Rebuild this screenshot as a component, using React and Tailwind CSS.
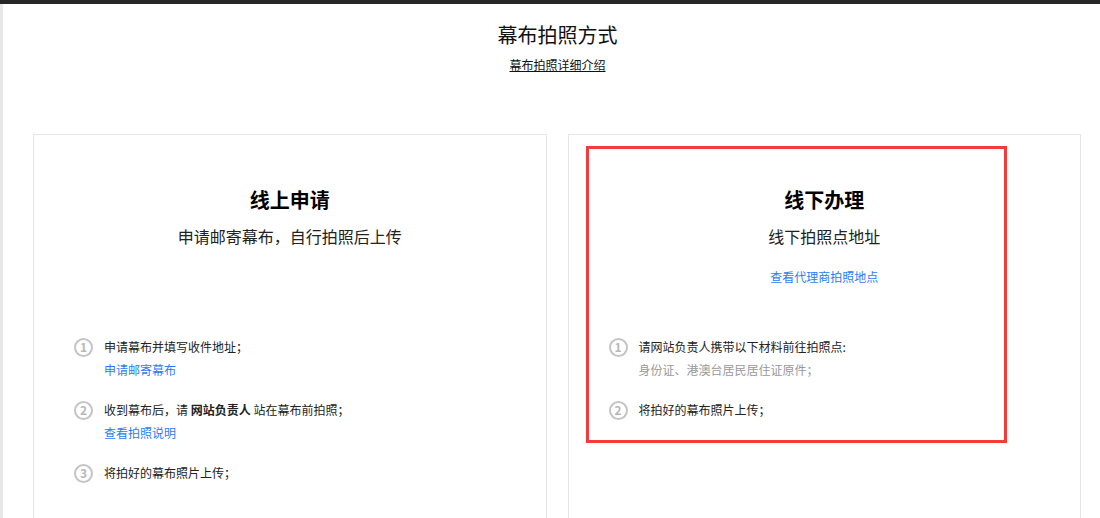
const font = { fontFamily: '"Noto Sans CJK SC", "Microsoft YaHei", sans-serif' };

function StepNum({ n }) {
  return <span className="mt-[2.5px] w-[19px] h-[19px] shrink-0 rounded-full border-2 border-[#c4c4c4] text-[#b8b8b8] text-[12px] font-bold leading-none flex items-center justify-center">{n}</span>;
}

function Step({ n, children, sub }) {
  return <div className="flex items-start gap-[11px]">
    <StepNum n={n}/>
    <div className="text-[12px] leading-[23px] text-[#222]">
      <p>{children}</p>
      {sub}
    </div>
  </div>;
}

function Card({ title, subtitle, link, children, highlight }) {
  return <div className="relative border border-[#e6e6e6] h-[400px] bg-white">
    {highlight && <div className="absolute left-[17px] top-[11px] w-[421px] h-[297px] border-[3px] border-[#f23c3c]"/>}
    <div className="h-[200px] pt-[51px] text-center">
      <h2 className="text-[20px] leading-[28px] font-bold text-black">{title}</h2>
      <p className="mt-[10px] text-[16px] leading-[24px] text-[#222]">{subtitle}</p>
      {link && <a className="block mt-[20px] text-[12px] leading-[18px] text-[#2d7bf4]">{link}</a>}
    </div>
    <div className="pl-[40px] flex flex-col gap-[17px]">
      {children}
    </div>
  </div>;
}

export default function App() {
  return <div className="w-[1100px] h-[518px] overflow-hidden bg-white" style={font}>
    <div className="h-[4px] bg-[#262626]"/>
    <div className="flex">
      <div className="w-[3px] h-[514px] bg-[#e8e8e8] shrink-0"/>
      <div className="flex-1">
        <div className="pl-[12px] pt-[17px] text-center">
          <h1 className="text-[20px] leading-[28px] text-[#111]">幕布拍照方式</h1>
          <a className="inline-block mt-[7px] text-[12px] leading-[18px] text-[#111] underline">幕布拍照详细介绍</a>
        </div>
        <div className="ml-[30px] mt-[59px] w-[1048px] grid grid-cols-2 gap-[21px]">
          <Card title="线上申请" subtitle="申请邮寄幕布，自行拍照后上传">
            <Step n="1" sub={<a className="block text-[#2d7bf4]">申请邮寄幕布</a>}>申请幕布并填写收件地址；</Step>
            <Step n="2" sub={<a className="block text-[#2d7bf4]">查看拍照说明</a>}>收到幕布后，请 <b className="font-bold">网站负责人</b> 站在幕布前拍照；</Step>
            <Step n="3">将拍好的幕布照片上传；</Step>
          </Card>
          <Card title="线下办理" subtitle="线下拍照点地址" link="查看代理商拍照地点" highlight>
            <Step n="1" sub={<p className="text-[#999]">身份证、港澳台居民居住证原件；</p>}>请网站负责人携带以下材料前往拍照点:</Step>
            <Step n="2">将拍好的幕布照片上传；</Step>
          </Card>
        </div>
      </div>
    </div>
  </div>;
}
